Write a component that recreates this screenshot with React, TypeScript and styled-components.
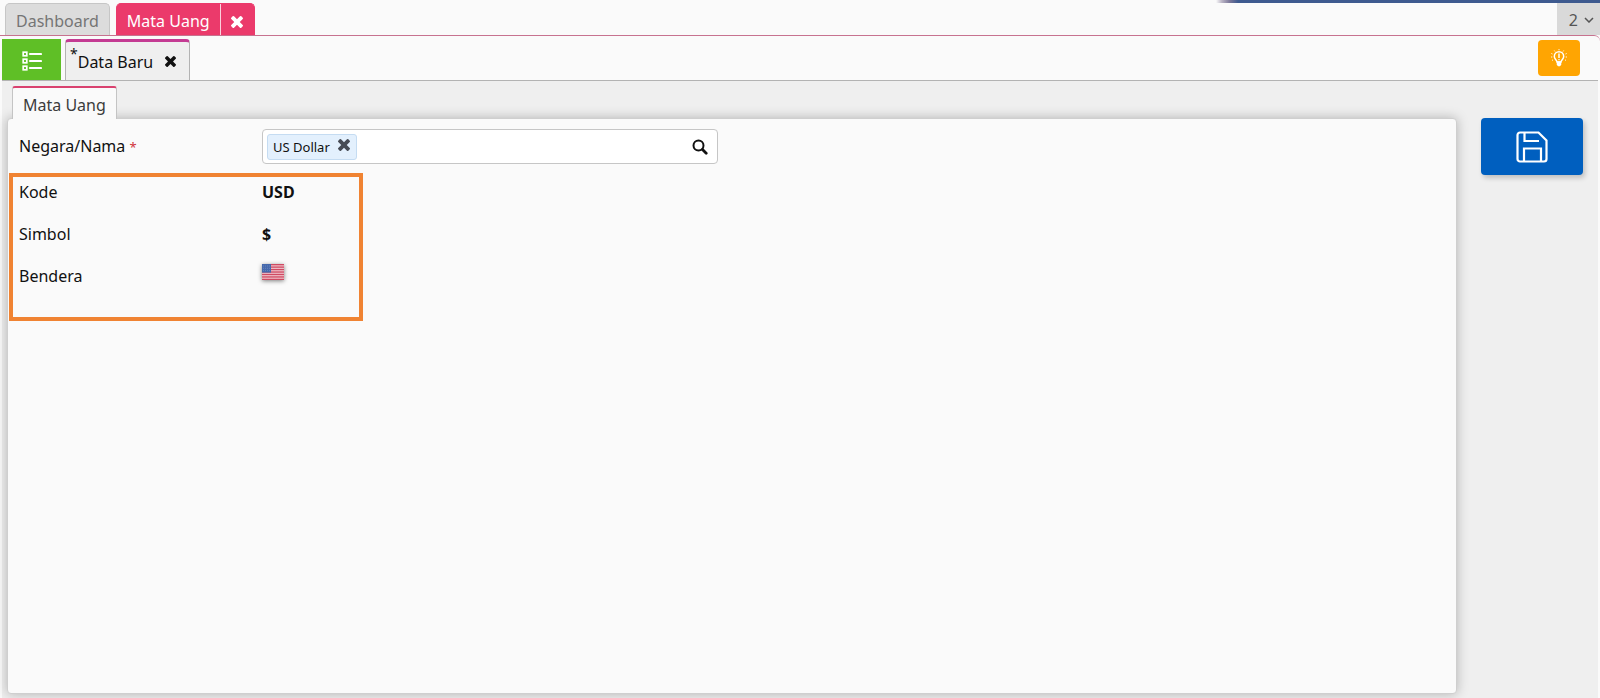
import React from "react";
import styled, { createGlobalStyle, css } from "styled-components";

const GlobalStyle = createGlobalStyle`
  *, *::before, *::after { box-sizing: border-box; }
  body {
    margin: 0;
    background: #fafafa;
    color: #111;
    font-family: "Noto Sans", "Open Sans", sans-serif;
    font-size: 16px;
    line-height: 24px;
  }
  button, input { font: inherit; color: inherit; }
  button { border: 0; padding: 0; cursor: pointer; }
`;

const Page = styled.div`
  display: flex;
  flex-direction: column;
  min-height: 100vh;
`;

const TopStrip = styled.div`
  height: 3px;
  margin-left: 76%;
  background: linear-gradient(
    to right,
    #fafafa 0,
    #b9b3c4 6px,
    #7a7698 14px,
    #3e5a8f 22px,
    #3e5a8f
  );
`;

const ModuleBar = styled.nav`
  display: flex;
  align-items: stretch;
  height: 32px;
  padding-left: 5px;
`;

const ModuleTab = styled.div<{ $active?: boolean }>`
  display: flex;
  margin-right: 6px;
  border: 1px solid #c6c6c6;
  border-bottom: 0;
  border-radius: 5px 5px 0 0;
  background: #dcdcdc;
  color: #757575;
  overflow: hidden;
  ${(p) =>
    p.$active &&
    css`
      border-color: #eb3a6b;
      background: #eb3a6b;
      color: #fff;
    `}
`;

const TabButton = styled.button`
  padding: 2px 10px 0;
  background: none;
`;

const CloseButton = styled.button<{ $divided?: boolean }>`
  display: flex;
  align-items: center;
  justify-content: center;
  background: none;
  ${(p) =>
    p.$divided &&
    css`
      width: 34px;
      padding-top: 4px;
      border-left: 1px solid #fbd0dc;
    `}
`;

const OpenCount = styled.button`
  display: flex;
  align-items: center;
  justify-content: flex-end;
  gap: 6px;
  width: 43px;
  margin-left: auto;
  padding: 2px 6px 0 0;
  background: #d9d9d9;
  color: #555;
`;

const Workspace = styled.div`
  flex: 1;
  display: flex;
  flex-direction: column;
  padding: 0 2px;
  border-top: 1px solid #c7728f;
  border-top-right-radius: 6px;
`;

const DocumentBar = styled.div`
  display: flex;
  align-items: flex-end;
  height: 45px;
  border-bottom: 1px solid #b3b3b3;
`;

const ListButton = styled.button`
  display: flex;
  align-items: center;
  justify-content: center;
  width: 59px;
  height: 41px;
  margin-right: 4px;
  padding-top: 2px;
  background: #5fbf26;
  color: #fff;
`;

const DocumentTab = styled.div`
  display: flex;
  align-items: center;
  justify-content: space-between;
  width: 125px;
  height: 41px;
  padding: 0 13px 0 4px;
  border: 1px solid #b3b3b3;
  border-top: 3px solid #c43b93;
  border-bottom: 0;
  border-radius: 4px 4px 0 0;
  background: #efefef;
`;

const DocumentName = styled.button`
  display: flex;
  padding-top: 2px;
  background: none;
`;

const Unsaved = styled.span`
  align-self: flex-start;
  font-size: 14px;
  line-height: 8px;
`;

const TipButton = styled.button`
  display: flex;
  align-items: center;
  justify-content: center;
  align-self: center;
  width: 42px;
  height: 36px;
  margin: 0 18px 0 auto;
  border-radius: 4px;
  background: #ffa502;
  color: #fff;
`;

const Content = styled.main`
  flex: 1;
  display: flex;
  gap: 24px;
  padding: 5px 15px 4px 5px;
  background: #efefef;
`;

const Sheet = styled.section`
  flex: 1;
  display: flex;
  flex-direction: column;
`;

const SheetTab = styled.button`
  position: relative;
  z-index: 1;
  align-self: flex-start;
  height: 33px;
  margin: 0 0 -1px 5px;
  padding: 2px 10px 0;
  border: 1px solid #c4c4c4;
  border-top: 2px solid #d9426f;
  border-bottom: 0;
  border-radius: 3px 3px 0 0;
  background: #fafafa;
  color: #3c3c3c;
`;

const Panel = styled.form`
  flex: 1;
  padding: 10px 1px;
  border: 1px solid #cfcfcf;
  border-radius: 4px;
  background: #fafafa;
  box-shadow: 0 0 12px rgba(0, 0, 0, 0.25);
`;

const Row = styled.div`
  display: grid;
  grid-template-columns: 243px minmax(0, 456px);
  align-items: center;
  padding-left: 10px;
`;

const Required = styled.span`
  color: #d0333c;
  font-size: 13px;
`;

const Lookup = styled.div`
  display: flex;
  align-items: center;
  height: 35px;
  padding: 0 9px 0 4px;
  border: 1px solid #c6c6c6;
  border-radius: 4px;
  background: #fff;
`;

const Chip = styled.span`
  display: flex;
  align-items: center;
  gap: 8px;
  height: 26px;
  padding: 0 6px 0 5px;
  border: 1px solid #c5dcf2;
  border-radius: 3px;
  background: #e3f0fd;
  font-size: 13px;
  white-space: nowrap;
`;

const ChipClose = styled(CloseButton)`
  padding-bottom: 3px;
  color: #474c55;
`;

const LookupInput = styled.input`
  flex: 1;
  min-width: 0;
  border: 0;
  outline: 0;
  background: none;
`;

const IconButton = styled.button`
  display: flex;
  background: none;
`;

const Highlight = styled.dl`
  width: 354px;
  margin: 9px 0 0;
  padding-bottom: 14px;
  border: 4px solid #f08332;
`;

const DetailRow = styled.div`
  display: grid;
  grid-template-columns: 243px 1fr;
  align-items: center;
  height: 42px;
  padding: 0 0 12px 6px;
`;

const Term = styled.dt``;

const Detail = styled.dd`
  margin: 0;
  font-weight: 700;
`;

const Flag = styled.svg`
  display: block;
  margin-top: -8px;
  filter: drop-shadow(0 1px 2px rgba(0, 0, 0, 0.5));
`;

const Actions = styled.aside`
  padding-top: 32px;
`;

const SaveButton = styled.button`
  display: flex;
  align-items: center;
  justify-content: center;
  width: 102px;
  height: 57px;
  border-radius: 4px;
  background: #005fbf;
  color: #fff;
  box-shadow: 2px 3px 5px rgba(0, 0, 0, 0.2);
`;

const CrossIcon = ({ size = 11 }: { size?: number }) => (
  <svg width={size} height={size} viewBox="302 366 1188 1188" fill="currentColor" aria-hidden="true">
    <path d="M1490 1322q0 40-28 68l-136 136q-28 28-68 28t-68-28l-294-294-294 294q-28 28-68 28t-68-28l-136-136q-28-28-28-68t28-68l294-294-294-294q-28-28-28-68t28-68l136-136q28-28 68-28t68 28l294 294 294-294q28-28 68-28t68 28l136 136q28 28 28 68t-28 68l-294 294 294 294q28 28 28 68z" />
  </svg>
);

const ChevronIcon = () => (
  <svg width="10" height="6" viewBox="0 0 10 6" fill="none" stroke="currentColor" strokeWidth="1.5" aria-hidden="true">
    <path d="M1 1l4 4 4-4" />
  </svg>
);

const ListIcon = () => (
  <svg width="20" height="20" viewBox="0 0 20 20" fill="none" stroke="currentColor" aria-hidden="true">
    {[3, 10, 17].map((y) => (
      <g key={y}>
        <rect x="1.200" y={y - 1.8} width="3.600" height="3.600" strokeWidth="1.700" />
        <path d={`M8 ${y}h11`} strokeWidth="2.200" strokeLinecap="round" />
      </g>
    ))}
  </svg>
);

const BulbIcon = () => (
  <svg width="16" height="18" viewBox="0 0 16 18" fill="none" stroke="currentColor" aria-hidden="true">
    <path d="M6 13c0-2-2.700-2.800-2.700-5.600a4.700 4.700 0 0 1 9.400 0C12.700 10.200 10 11 10 13z" strokeWidth="1.500" />
    <path d="M6 12.500h4v3L9 17H7l-1-1.500z" fill="currentColor" strokeWidth="0.500" />
    <path d="M8 4.500v4.500" strokeWidth="1.500" />
    <path d="M8 10v1.300" strokeWidth="1.300" />
    <path d="M8 0v1.300M3.300 1.500l.7 1M12.700 1.500l-.7 1M.3 4.500l1.200.5M15.700 4.500l-1.200.5M0 8h1.300M16 8h-1.300M1 11.500l1-.7M15 11.500l-1-.7" strokeWidth="0.900" />
  </svg>
);

const SearchIcon = () => (
  <svg width="16" height="16" viewBox="0 0 16 16" fill="none" stroke="#111" aria-hidden="true">
    <circle cx="6.500" cy="6.500" r="5" strokeWidth="2" />
    <path d="M10.500 10.500l3.700 3.700" strokeWidth="2.800" strokeLinecap="round" />
  </svg>
);

const SaveIcon = () => (
  <svg width="32" height="32" viewBox="0 0 32 32" fill="none" stroke="currentColor" strokeWidth="2.200" aria-hidden="true">
    <path d="M4 1.500h18.500L30.500 9.500V28a2.500 2.500 0 0 1-2.500 2.500H4A2.500 2.500 0 0 1 1.500 28V4A2.500 2.500 0 0 1 4 1.500z" />
    <path d="M8.500 2v8H23" />
    <path d="M8 30V17.500h17V30" />
  </svg>
);

const UsFlag = () => (
  <Flag width="22" height="16" viewBox="0 0 22 16" role="img" aria-label="Amerika Serikat">
    <rect width="22" height="16" fill="#f0c3cb" />
    {[0, 1, 2, 3, 4, 5, 6].map((i) => (
      <rect key={i} y={i * 2.46} width="22" height="1.300" fill="#cf4a62" />
    ))}
    <rect width="9" height="8.600" fill="#4468ac" />
    <path d="M1 2h7M1 4.300h7M1 6.600h7" stroke="#7d97c8" strokeWidth="0.600" strokeDasharray="1 1" />
  </Flag>
);

export default function App() {
  return (
    <>
      <GlobalStyle />
      <Page>
        <TopStrip />
        <ModuleBar>
          <ModuleTab>
            <TabButton type="button">Dashboard</TabButton>
          </ModuleTab>
          <ModuleTab $active>
            <TabButton type="button">Mata Uang</TabButton>
            <CloseButton type="button" $divided aria-label="Tutup Mata Uang">
              <CrossIcon size={12} />
            </CloseButton>
          </ModuleTab>
          <OpenCount type="button">
            2 <ChevronIcon />
          </OpenCount>
        </ModuleBar>
        <Workspace>
          <DocumentBar>
            <ListButton type="button" aria-label="Daftar">
              <ListIcon />
            </ListButton>
            <DocumentTab>
              <DocumentName type="button">
                <Unsaved>*</Unsaved>Data Baru
              </DocumentName>
              <CloseButton type="button" aria-label="Tutup Data Baru">
                <CrossIcon size={11} />
              </CloseButton>
            </DocumentTab>
            <TipButton type="button" aria-label="Tips">
              <BulbIcon />
            </TipButton>
          </DocumentBar>
          <Content>
            <Sheet>
              <SheetTab type="button">Mata Uang</SheetTab>
              <Panel onSubmit={(e) => e.preventDefault()}>
                <Row>
                  <label htmlFor="country">
                    Negara/Nama <Required>*</Required>
                  </label>
                  <Lookup>
                    <Chip>
                      US Dollar
                      <ChipClose type="button" aria-label="Hapus US Dollar">
                        <CrossIcon size={12} />
                      </ChipClose>
                    </Chip>
                    <LookupInput id="country" type="text" />
                    <IconButton type="button" aria-label="Cari">
                      <SearchIcon />
                    </IconButton>
                  </Lookup>
                </Row>
                <Highlight>
                  <DetailRow>
                    <Term>Kode</Term>
                    <Detail>USD</Detail>
                  </DetailRow>
                  <DetailRow>
                    <Term>Simbol</Term>
                    <Detail>$</Detail>
                  </DetailRow>
                  <DetailRow>
                    <Term>Bendera</Term>
                    <Detail>
                      <UsFlag />
                    </Detail>
                  </DetailRow>
                </Highlight>
              </Panel>
            </Sheet>
            <Actions>
              <SaveButton type="button" aria-label="Simpan">
                <SaveIcon />
              </SaveButton>
            </Actions>
          </Content>
        </Workspace>
      </Page>
    </>
  );
}
